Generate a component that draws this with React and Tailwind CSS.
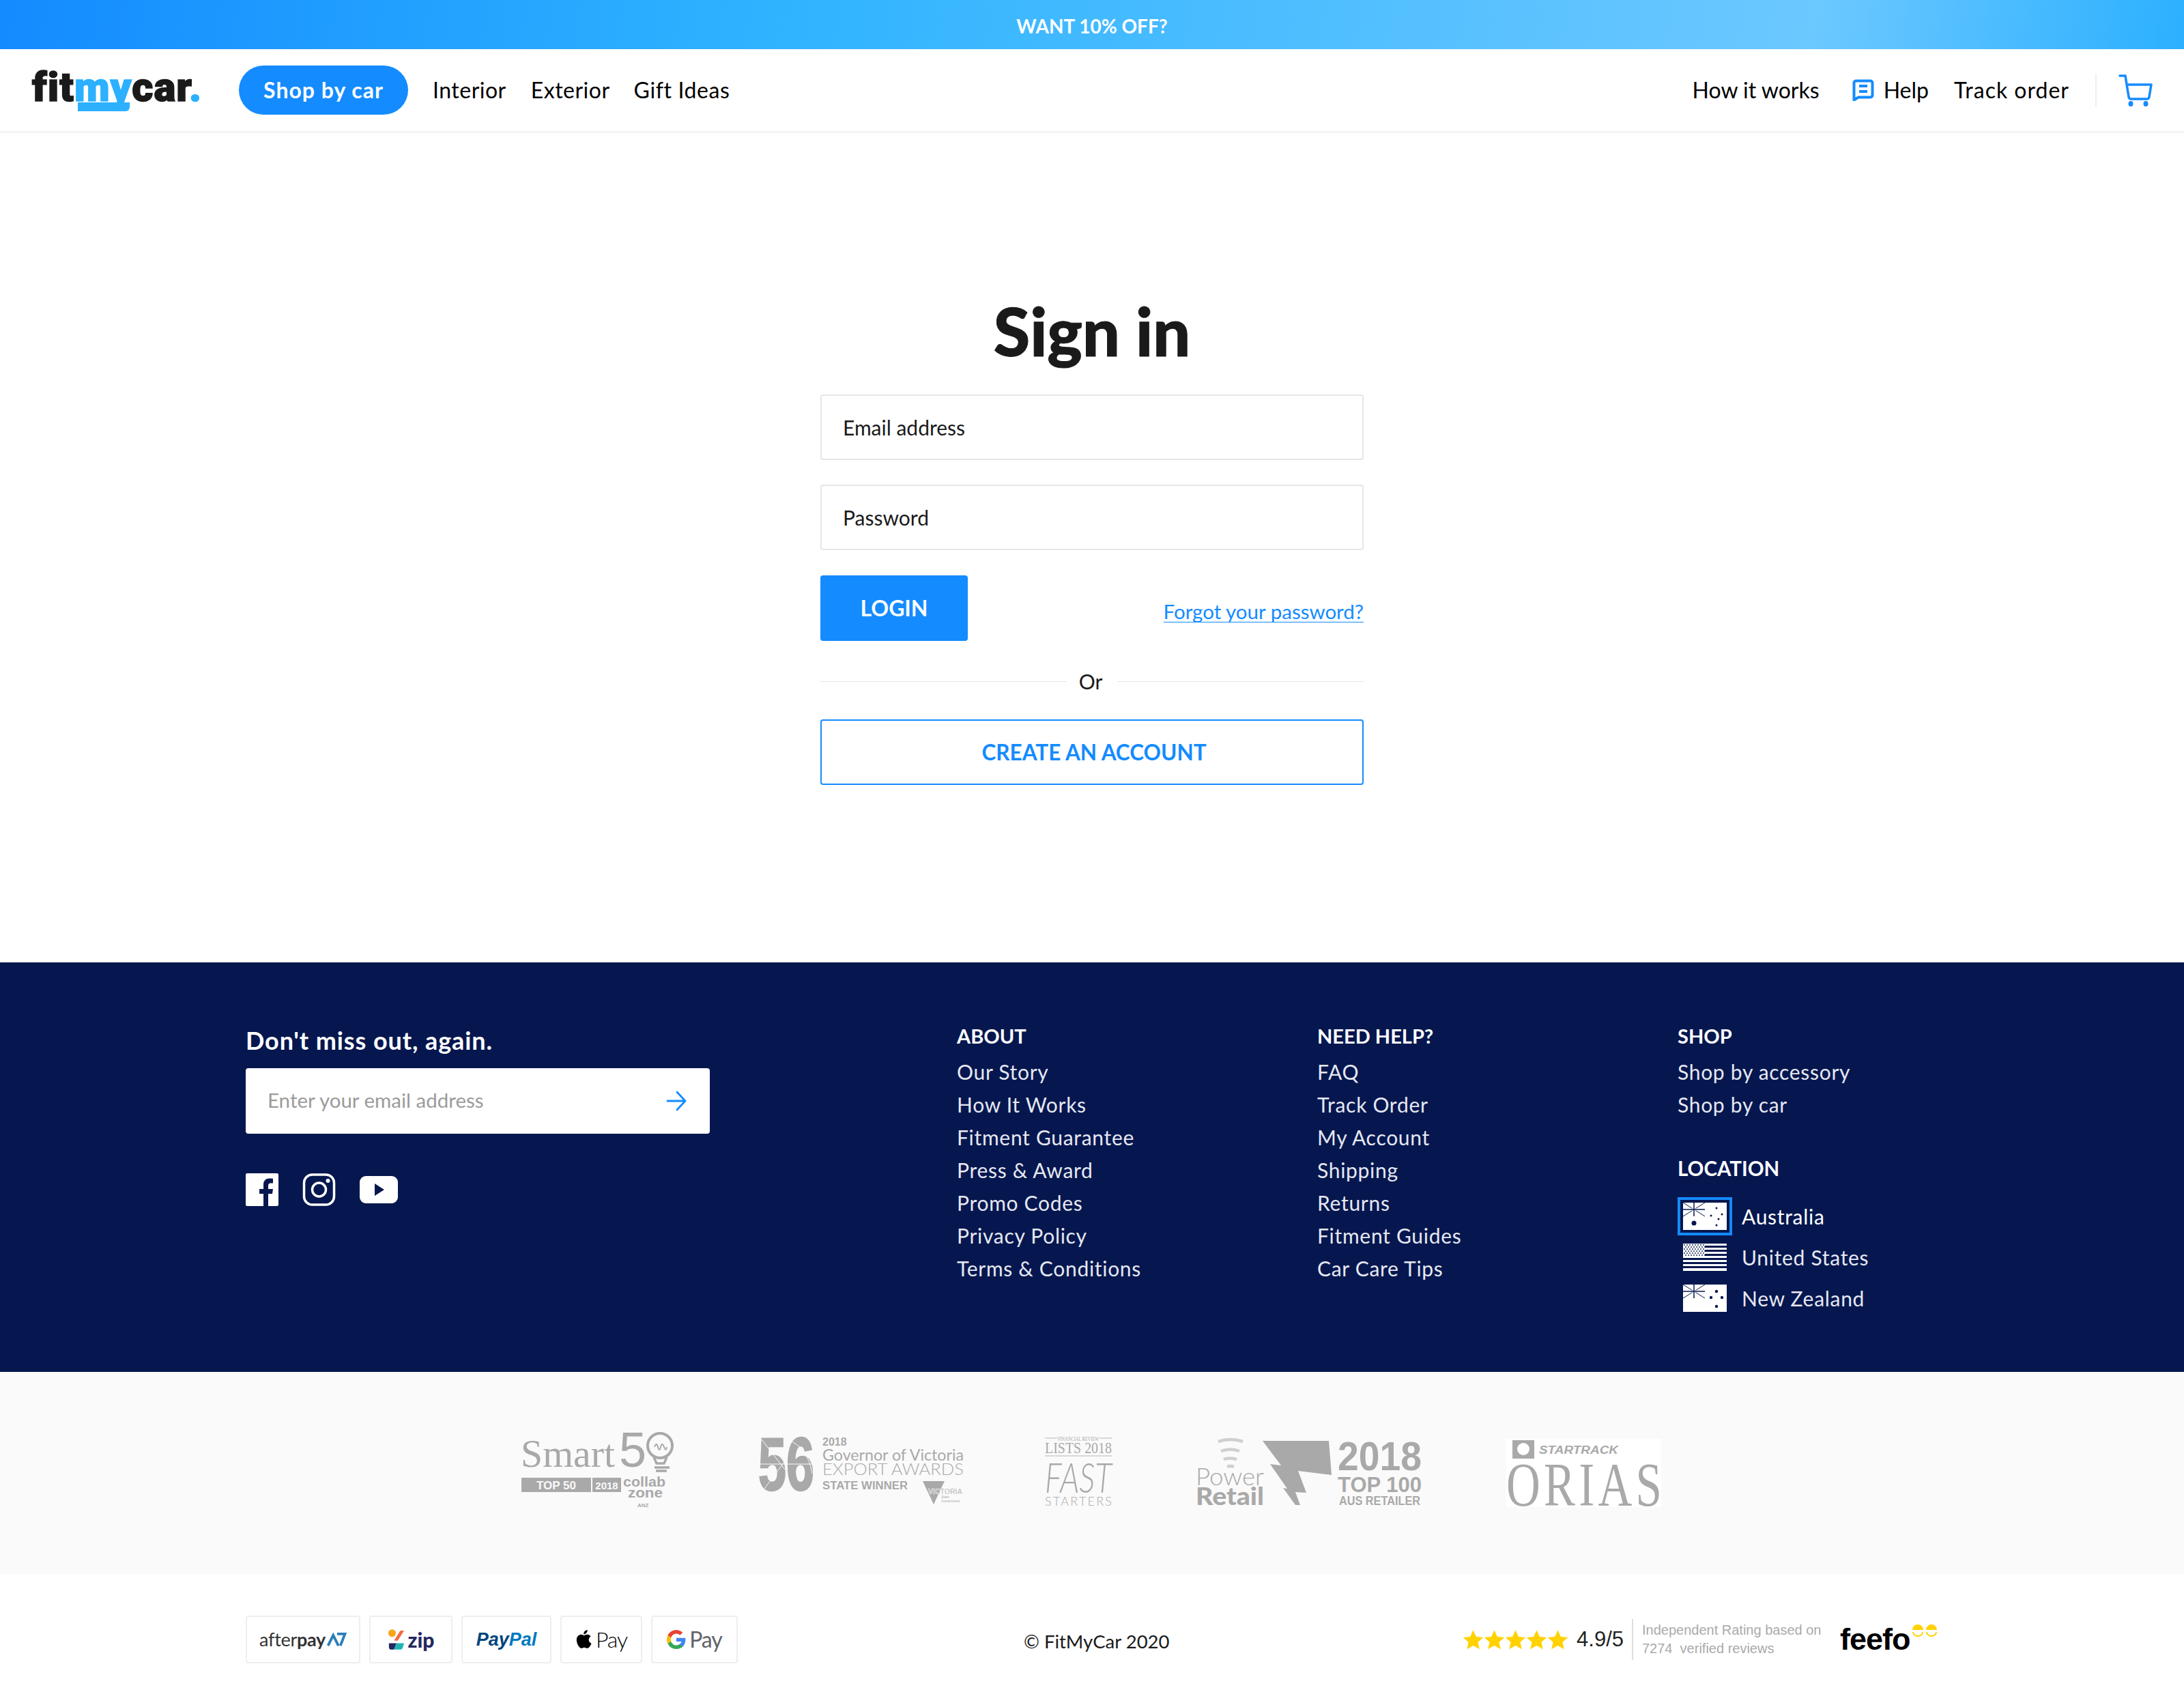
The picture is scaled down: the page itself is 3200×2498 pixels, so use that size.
import React from "react";

const aboutLinks = ["Our Story", "How It Works", "Fitment Guarantee", "Press & Award", "Promo Codes", "Privacy Policy", "Terms & Conditions"];
const helpLinks = ["FAQ", "Track Order", "My Account", "Shipping", "Returns", "Fitment Guides", "Car Care Tips"];
const shopLinks = ["Shop by accessory", "Shop by car"];

function Logo() {
  return (
    <div className="relative w-[250px] h-[62px] font-['Roboto',sans-serif] font-black text-[60px] leading-[53px] tracking-[1px] [-webkit-text-stroke:1.5px_currentColor] text-[#1a1a1a]">
      <span className="absolute left-[67px] top-[47px] h-[15px] w-[76px] rounded-br-[6px] border-t-2 border-white bg-[#2cb0ff]" />
      <span className="relative">fit</span>
      <span className="relative text-[#2cb0ff]">my</span>
      <span className="relative">car</span>
      <span className="relative text-[#2cb0ff]">.</span>
    </div>
  );
}

function HelpIcon() {
  return (
    <svg viewBox="0 0 32 32" className="w-[32px] h-[32px]">
      <path d="M2.500 5.500a3 3 0 0 1 3-3h21a3 3 0 0 1 3 3v18a3 3 0 0 1-3 3H9l-6.500 4z" fill="none" stroke="#148bff" strokeWidth="4" strokeLinejoin="round" />
      <path d="M10 10h12M10 18h12" stroke="#148bff" strokeWidth="4" />
    </svg>
  );
}

function CartIcon() {
  return (
    <svg viewBox="0 0 50 48" className="w-[50px] h-[48px]" fill="none">
      <path d="M2 3h8l5 31c.3 2 1.500 3 3.500 3h23c2 0 3.200-1 3.500-3L48 16H13" stroke="#148bff" strokeWidth="3.500" strokeLinecap="round" strokeLinejoin="round" />
      <ellipse cx="18" cy="44" rx="3.500" ry="4" fill="#148bff" />
      <ellipse cx="40" cy="44" rx="3.500" ry="4" fill="#148bff" />
    </svg>
  );
}

function Header() {
  return (
    <header className="h-[120px] bg-white shadow-[0_2px_4px_rgba(0,0,0,0.08)] relative flex items-center pl-[47px] pr-[46px] text-[32px] text-black">
      <Logo />
      <a className="ml-[53px] h-[72px] w-[248px] rounded-full bg-[#148bff] text-white font-bold flex items-center justify-center tracking-[1px]">Shop by car</a>
      <a className="ml-[36px] tracking-[0.5px]">Interior</a>
      <a className="ml-[36px] tracking-[0.5px]">Exterior</a>
      <a className="ml-[35px] tracking-[0.6px]">Gift Ideas</a>
      <a className="ml-auto">How it works</a>
      <span className="ml-[48px]"><HelpIcon /></span>
      <a className="ml-[14px]">Help</a>
      <a className="ml-[37px] tracking-[1px]">Track order</a>
      <span className="ml-[38px] h-[48px] w-[2px] bg-[#eeeeee]" />
      <span className="ml-[32px]"><CartIcon /></span>
    </header>
  );
}

function SignIn() {
  return (
    <main className="h-[1218px] pt-[251px] flex flex-col items-center">
      <h1 className="h-[150px] -mt-[32px] text-[97px] leading-[148px] font-black text-[#1a1a1a] font-['Lato',sans-serif] [-webkit-text-stroke:1px_#1a1a1a]">Sign in</h1>
      <div className="w-[796px] flex flex-col">
        <div className="h-[96px] mt-[17px] flex items-center px-[31px] border-2 border-[#e6e6e6] rounded-[4px] text-[#1a1a1a]">Email address</div>
        <div className="h-[96px] mt-[36px] flex items-center px-[31px] border-2 border-[#e6e6e6] rounded-[4px] text-[#1a1a1a]">Password</div>
        <div className="mt-[37px] flex items-start justify-between">
          <button className="h-[96px] w-[216px] rounded-[4px] bg-[#148bff] text-white text-[32px] font-bold">LOGIN</button>
          <a className="mt-[38px] text-[#148bff] border-b border-[#148bff] text-[29.5px] leading-[30px] h-[31px]">Forgot your password?</a>
        </div>
        <div className="mt-[41px] h-[36px] flex items-center gap-[20px] text-[#1a1a1a]">
          <span className="flex-1 h-[1px] bg-[#e6e6e6]" />
          <span className="-ml-[2px] mr-[2px]">Or</span>
          <span className="flex-1 h-[1px] bg-[#e6e6e6]" />
        </div>
        <button className="mt-[38px] h-[96px] pl-[6px] pt-[2px] rounded-[4px] border-2 border-[#148bff] text-[#148bff] text-[31.5px] font-bold">CREATE AN ACCOUNT</button>
      </div>
    </main>
  );
}

function FlagAu({ nz }) {
  const stars = nz
    ? [[49, 10], [41, 19], [57, 19], [49, 32]]
    : [[49, 8], [41, 19], [57, 17], [52, 24], [49, 33]];
  return (
    <svg viewBox="0 0 64 40" className="w-[64px] h-[40px]">
      <rect width="64" height="40" fill="#fff" />
      <path d="M0 0l32 20M32 0L0 20" stroke="#06174f" strokeWidth="1" />
      <path d="M16 0v20M0 10h32" stroke="#fff" strokeWidth="3" />
      <path d="M16 0v20M0 10h32" stroke="#06174f" strokeWidth="1.500" />
      {!nz && <circle cx="16" cy="30" r="3.500" fill="#06174f" />}
      {stars.map(([x, y], i) => (
        <circle key={i} cx={x} cy={y} r={nz ? 2.200 : 1.500} fill="#06174f" />
      ))}
    </svg>
  );
}

function FlagUs() {
  return (
    <svg viewBox="0 0 64 40" className="w-[64px] h-[40px]">
      <rect width="64" height="40" fill="#fff" />
      {[3, 9, 15, 21, 27, 33].map((y) => (
        <rect key={y} y={y} width="64" height="3" fill="#06174f" />
      ))}
      <rect width="32" height="21" fill="#fff" />
      {[2, 5, 8, 11, 14, 17].map((y, r) =>
        [2, 6, 10, 14, 18, 22, 26, 30].map((x) => (
          <circle key={x} cx={x + (r % 2) * 2} cy={y} r="0.900" fill="#06174f" />
        ))
      )}
    </svg>
  );
}

function LinkColumn({ title, links }) {
  return (
    <div>
      <h4 className="h-[48px] leading-[48px] text-white font-bold text-[29px]">{title}</h4>
      <ul className="mt-[4px]">
        {links.map((l) => (
          <li key={l} className="h-[48px] leading-[48px] text-[#e6e8f2] tracking-[0.7px]">{l}</li>
        ))}
      </ul>
    </div>
  );
}

function Footer() {
  return (
    <footer className="h-[600px] bg-[#06174f] pt-[84px] px-[360px] grid grid-cols-[1042px_528px_528px_382px] text-[30px]">
      <div>
        <h3 className="h-[60px] leading-[60px] text-white font-bold text-[36px] tracking-[0.9px]">Don't miss out, again.</h3>
        <div className="mt-[11px] w-[680px] h-[96px] rounded-[4px] bg-white flex items-center justify-between pl-[32px] pr-[34px]">
          <span className="text-[#9b9b9b] text-[29.5px] pb-[2px]">Enter your email address</span>
          <svg viewBox="0 0 30 30" className="w-[30px] h-[30px]" fill="none" stroke="#148bff" strokeWidth="2.800" strokeLinecap="round" strokeLinejoin="round">
            <path d="M2 15h26M16 2l12 13-12 13" />
          </svg>
        </div>
        <div className="mt-[58px] flex items-center gap-[35px]">
          <svg viewBox="0 0 48 48" className="w-[48px] h-[48px]">
            <path fill="#fff" d="M2 0h44a2 2 0 0 1 2 2v44a2 2 0 0 1-2 2H33V30h6l1-7h-7v-5c0-2 1-3.500 3.500-3.500H40V8c-1-.2-3-.4-5-.4-5.500 0-9 3.400-9 9V23h-6v7h6v18H2a2 2 0 0 1-2-2V2a2 2 0 0 1 2-2z" />
          </svg>
          <svg viewBox="0 0 48 48" className="w-[49px] h-[48px]" fill="none" stroke="#fff">
            <rect x="2" y="2" width="44" height="44" rx="12" strokeWidth="3.500" />
            <circle cx="24" cy="24" r="10" strokeWidth="3.500" />
            <circle cx="37" cy="11" r="3" fill="#fff" stroke="none" />
          </svg>
          <svg viewBox="0 0 56 40" className="w-[56px] h-[40px]">
            <path fill="#fff" fillRule="evenodd" d="M9 0h38a9 9 0 0 1 9 9v22a9 9 0 0 1-9 9H9a9 9 0 0 1-9-9V9a9 9 0 0 1 9-9zm13 11v18l14-9z" />
          </svg>
        </div>
      </div>
      <LinkColumn title="ABOUT" links={aboutLinks} />
      <LinkColumn title="NEED HELP?" links={helpLinks} />
      <div>
        <LinkColumn title="SHOP" links={shopLinks} />
        <h4 className="mt-[46px] h-[48px] leading-[48px] text-white font-bold text-[29.500px]">LOCATION</h4>
        <div className="mt-[16px] flex flex-col tracking-[0.7px]">
          <div className="h-[60px] flex items-center gap-[14px] text-white">
            <span className="w-[80px] h-[56px] border-[4px] border-[#148bff] flex items-center justify-center"><FlagAu /></span>
            Australia
          </div>
          <div className="h-[60px] flex items-center gap-[14px] text-[#e6e8f2]">
            <span className="w-[80px] flex justify-center"><FlagUs /></span>
            United States
          </div>
          <div className="h-[60px] flex items-center gap-[14px] text-[#e6e8f2]">
            <span className="w-[80px] flex justify-center"><FlagAu nz /></span>
            New Zealand
          </div>
        </div>
      </div>
    </footer>
  );
}

function Awards() {
  const g = "#a9a9a9";
  const bg = "#fafafa";
  return (
    <section className="h-[296px] bg-[#fafafa] flex items-center justify-center gap-[118px] pb-[8px]">
      {/* Smart 50 */}
      <svg viewBox="0 0 230 112" className="w-[230px] h-[112px]" fill={g}>
        <text x="1" y="51" fontFamily="Liberation Serif" fontSize="56" textLength="138" lengthAdjust="spacingAndGlyphs">Smart</text>
        <text x="145" y="51" fontFamily="Liberation Sans" fontSize="72">5</text>
        <circle cx="205" cy="20" r="18" fill="none" stroke={g} strokeWidth="4" />
        <path d="M197 22q3-8 5 0t4 0 5 0 4 0" fill="none" stroke={g} strokeWidth="2" />
        <path d="M196 37l4 9h11l4-9M197 52h22M199 57h16" fill="none" stroke={g} strokeWidth="3.500" />
        <rect x="2" y="67" width="102" height="21" />
        <rect x="106" y="67" width="42" height="21" />
        <text x="53" y="84" textAnchor="middle" fill={bg} fontFamily="Liberation Sans" fontWeight="700" fontSize="17">TOP 50</text>
        <text x="127" y="84" textAnchor="middle" fill={bg} fontFamily="Liberation Sans" fontWeight="700" fontSize="15">2018</text>
        <text x="151" y="80" fontFamily="Liberation Sans" fontWeight="700" fontSize="20" textLength="62" lengthAdjust="spacingAndGlyphs">collab</text>
        <text x="158" y="96" fontFamily="Liberation Sans" fontWeight="700" fontSize="20" textLength="51" lengthAdjust="spacingAndGlyphs">zone</text>
        <text x="172" y="110" fontFamily="Liberation Sans" fontWeight="700" fontSize="8">ANZ</text>
      </svg>
      {/* Export awards */}
      <svg viewBox="0 0 302 102" className="w-[302px] h-[102px]" fill={g}>
        <text x="1" y="80" fontFamily="Liberation Sans" fontWeight="700" fontSize="110" stroke={g} strokeWidth="2.500" textLength="82" lengthAdjust="spacingAndGlyphs">56</text>
        <path d="M0 42h84M6 6l34 44M44 6q30 12 36 50M10 78l30-40" fill="none" stroke={bg} strokeWidth="1" />
        <text x="65" y="30" fill={bg} fontFamily="Liberation Sans" fontWeight="700" fontSize="9">TH</text>
        <text x="95" y="15" fontFamily="Liberation Sans" fontWeight="700" fontSize="16">2018</text>
        <text x="95" y="37" fontFamily="Lato" fontSize="24" textLength="207" lengthAdjust="spacingAndGlyphs">Governor of Victoria</text>
        <text x="95" y="58" fontFamily="Lato" fontWeight="300" fontSize="24" textLength="207" lengthAdjust="spacingAndGlyphs">EXPORT AWARDS</text>
        <text x="95" y="79" fontFamily="Liberation Sans" fontWeight="700" fontSize="16" textLength="125" lengthAdjust="spacingAndGlyphs">STATE WINNER</text>
        <path d="M242 67h32l-16 34z" />
        <text x="250" y="86" fontFamily="Liberation Sans" fontWeight="700" fontSize="11" stroke={bg} strokeWidth="0.500" textLength="50" lengthAdjust="spacingAndGlyphs">VICTORIA</text>
        <text x="269" y="92" fontFamily="Liberation Sans" fontSize="5">State</text>
        <text x="269" y="98" fontFamily="Liberation Sans" fontSize="5">Government</text>
      </svg>
      {/* Fast starters */}
      <svg viewBox="0 0 102 106" className="w-[102px] h-[106px]" fill={g}>
        <path d="M1 6h18M81 6h18M1 32h98" stroke="#d8d8d8" strokeWidth="2" />
        <text x="20" y="10" fontFamily="Liberation Serif" fontSize="8" textLength="60" lengthAdjust="spacingAndGlyphs">FINANCIAL REVIEW</text>
        <text x="1" y="28" fontFamily="Liberation Serif" fontSize="23" textLength="98" lengthAdjust="spacingAndGlyphs">LISTS 2018</text>
        <text x="1" y="86" fontFamily="Lato" fontWeight="300" fontStyle="italic" fontSize="62" textLength="98" lengthAdjust="spacingAndGlyphs">FAST</text>
        <text x="1" y="105" fontFamily="Lato" fontWeight="300" fontSize="18" textLength="98">STARTERS</text>
      </svg>
      {/* Power Retail */}
      <svg viewBox="0 0 335 106" className="w-[335px] h-[106px]" fill={g}>
        <path d="M35 11q18-6 36 0M39 25q14-5 27 0M43 37q9-3 19 0M48 48q5-2 10 0" fill="none" stroke="#cfcfcf" strokeWidth="4.500" />
        <text x="2" y="75" fontFamily="Lato" fontWeight="300" fontSize="36" textLength="100" lengthAdjust="spacingAndGlyphs">Power</text>
        <text x="2" y="104" fontFamily="Lato" fontWeight="900" fontSize="36" textLength="100" lengthAdjust="spacingAndGlyphs">Retail</text>
        <path d="M100 10h97l4 50-49-6 12 32-16-1 7 19h-7l-18-25 6 1-25-36 16 2z" />
        <text x="210" y="53" fontFamily="Liberation Sans" fontWeight="700" fontSize="60" textLength="123" lengthAdjust="spacingAndGlyphs">2018</text>
        <text x="210" y="85" fontFamily="Liberation Sans" fontWeight="700" fontSize="32" textLength="123" lengthAdjust="spacingAndGlyphs">TOP 100</text>
        <text x="212" y="104" fontFamily="Liberation Sans" fontWeight="700" fontSize="18" textLength="119" lengthAdjust="spacingAndGlyphs">AUS RETAILER</text>
      </svg>
      {/* Startrack / Orias */}
      <svg viewBox="0 0 235 108" className="w-[235px] h-[108px]" fill={g}>
        <rect x="4" y="8" width="227" height="100" fill="#fff" />
        <rect x="13" y="10" width="32" height="27" />
        <circle cx="29" cy="23" r="9" fill="#fff" />
        <text x="52" y="30" fontFamily="Liberation Sans" fontWeight="700" fontStyle="italic" fontSize="16" textLength="116" lengthAdjust="spacingAndGlyphs">STARTRACK</text>
        <text transform="translate(4 106) scale(0.75 1)" fontFamily="Liberation Serif" fontSize="92" letterSpacing="7">ORIAS</text>
      </svg>
    </section>
  );
}

function PayCard({ width, children }) {
  return (
    <div className={`${width} h-[70px] rounded-[4px] border-2 border-[#eeeeee] flex items-center justify-center`}>
      {children}
    </div>
  );
}

function Star() {
  return (
    <svg viewBox="0 0 24 24" className="w-[31px] h-[31px]" fill="#ffd200">
      <path d="M12 1l3.400 7.500 8 .8-6 5.400 1.800 8L12 18.600 4.800 22.700l1.800-8-6-5.400 8-.8z" />
    </svg>
  );
}

function Bottom() {
  return (
    <section className="h-[192px] bg-white px-[360px] flex items-center font-['Liberation_Sans',sans-serif]">
      <div className="flex items-center w-[1140px] gap-[13px]">
        <PayCard width="w-[168px]">
          <span className="font-['Lato',sans-serif] text-[27px] tracking-[-0.3px] text-[#333]">after<span className="font-bold">pay</span></span>
          <svg viewBox="0 0 30 22" className="w-[30px] h-[21px] ml-[1px]"><path d="M2 20L10 4l8 16M16 2h12l-7 18" fill="none" stroke="#2b7fb8" strokeWidth="4" /></svg>
        </PayCard>
        <PayCard width="w-[122px]">
          <svg viewBox="0 0 28 36" className="w-[26px] h-[34px] mr-[4px]">
            <circle cx="7" cy="8" r="6" fill="#f9a51a" />
            <path d="M10 20L20 4h6L16 20z" fill="#f26b43" />
            <path d="M2 24h12l-4 10H6a4 4 0 0 1-4-4z" fill="#23285f" />
            <path d="M14 24h12l-2 6a5 5 0 0 1-5 4h-9z" fill="#1fb5b5" />
          </svg>
          <span className="font-['Lato',sans-serif] font-black text-[30px] text-[#23285f]">zip</span>
        </PayCard>
        <PayCard width="w-[132px]">
          <span className="font-bold italic text-[27px] text-[#00457c]">Pay<span className="text-[#0079c1]">Pal</span></span>
        </PayCard>
        <PayCard width="w-[120px]">
          <svg viewBox="0 0 24 28" className="w-[28px] h-[32px] mr-[2px]">
            <path fill="#000" d="M17 14.500c0-3 2.400-4.400 2.500-4.500-1.400-2-3.500-2.300-4.200-2.300-1.800-.2-3.500 1-4.400 1-.9 0-2.300-1-3.800-1-2 0-3.800 1.100-4.800 2.900-2 3.600-.5 8.800 1.500 11.700 1 1.400 2.100 3 3.700 3 1.500-.1 2-1 3.800-1s2.300 1 3.800 1c1.600 0 2.600-1.400 3.600-2.900 1.100-1.600 1.600-3.200 1.600-3.300-.1 0-3.300-1.200-3.300-4.600zM14 5.500c.8-1 1.400-2.400 1.200-3.800-1.200.1-2.600.8-3.500 1.800-.8.900-1.400 2.300-1.200 3.700 1.300.1 2.700-.7 3.500-1.700z" />
          </svg>
          <span className="font-['Lato',sans-serif] font-light text-[32px] tracking-[-1px] text-black">Pay</span>
        </PayCard>
        <PayCard width="w-[127px]">
          <svg viewBox="0 0 24 24" className="w-[28px] h-[28px] mr-[5px]">
            <path fill="#4285f4" d="M23.500 12.300c0-.8-.1-1.600-.2-2.300H12v4.500h6.500a5.500 5.500 0 0 1-2.400 3.600v3h3.900c2.200-2.100 3.500-5.200 3.500-8.800z" />
            <path fill="#34a853" d="M12 24c3.200 0 6-1.100 8-2.900l-3.900-3c-1.100.7-2.500 1.200-4.100 1.200-3.100 0-5.800-2.100-6.700-5H1.300v3.100A12 12 0 0 0 12 24z" />
            <path fill="#fbbc05" d="M5.300 14.300a7.200 7.200 0 0 1 0-4.600V6.600h-4a12 12 0 0 0 0 10.800z" />
            <path fill="#ea4335" d="M12 4.800c1.800 0 3.300.6 4.600 1.800L20 3.200A12 12 0 0 0 1.300 6.600l4 3.100c.9-2.800 3.600-4.900 6.700-4.900z" />
          </svg>
          <span className="font-['Lato',sans-serif] text-[32px] tracking-[-1px] text-[#5f6368]">Pay</span>
        </PayCard>
      </div>
      <div className="mt-[6px] font-['Lato',sans-serif] text-[27.5px] text-[#1a1a1a]">© FitMyCar 2020</div>
      <div className="ml-auto flex items-center">
        <div className="flex"><Star /><Star /><Star /><Star /><Star /></div>
        <span className="ml-[12px] text-[31px] text-[#222]">4.9/5</span>
        <span className="ml-[12px] w-[2px] h-[60px] bg-[#dddddd]" />
        <div className="ml-[13px] w-[274px] text-[20px] leading-[27px] text-[#aaaaaa]">
          <div>Independent Rating based on</div>
          <div>7274&nbsp; verified reviews</div>
        </div>
        <div className="relative w-[144px] ml-[16px]">
          <span className="font-bold text-[45px] tracking-[-1px] text-black">feefo</span>
          <svg viewBox="0 0 40 20" className="absolute right-0 top-[12px] w-[40px] h-[20px]">
            <path d="M2 8a8 8 0 0 1 16 0zM22 8a8 8 0 0 1 16 0z" fill="#ffd200" />
            <path d="M3 11a7 6 0 0 0 14 0M23 11a7 6 0 0 0 14 0" fill="none" stroke="#ffd200" strokeWidth="2" />
          </svg>
        </div>
      </div>
    </section>
  );
}

export default function App() {
  return (
    <div className="w-[3200px] bg-white font-['Lato',sans-serif] text-[30px]">
      <div className="h-[72px] pt-[3px] bg-[linear-gradient(100deg,#148bff_0%,#2fb3ff_35%,#6cc8ff_83%,#2cb0ff_100%)] flex items-center justify-center text-white font-bold text-[28px]">
        WANT 10% OFF?
      </div>
      <Header />
      <SignIn />
      <Footer />
      <Awards />
      <Bottom />
    </div>
  );
}
